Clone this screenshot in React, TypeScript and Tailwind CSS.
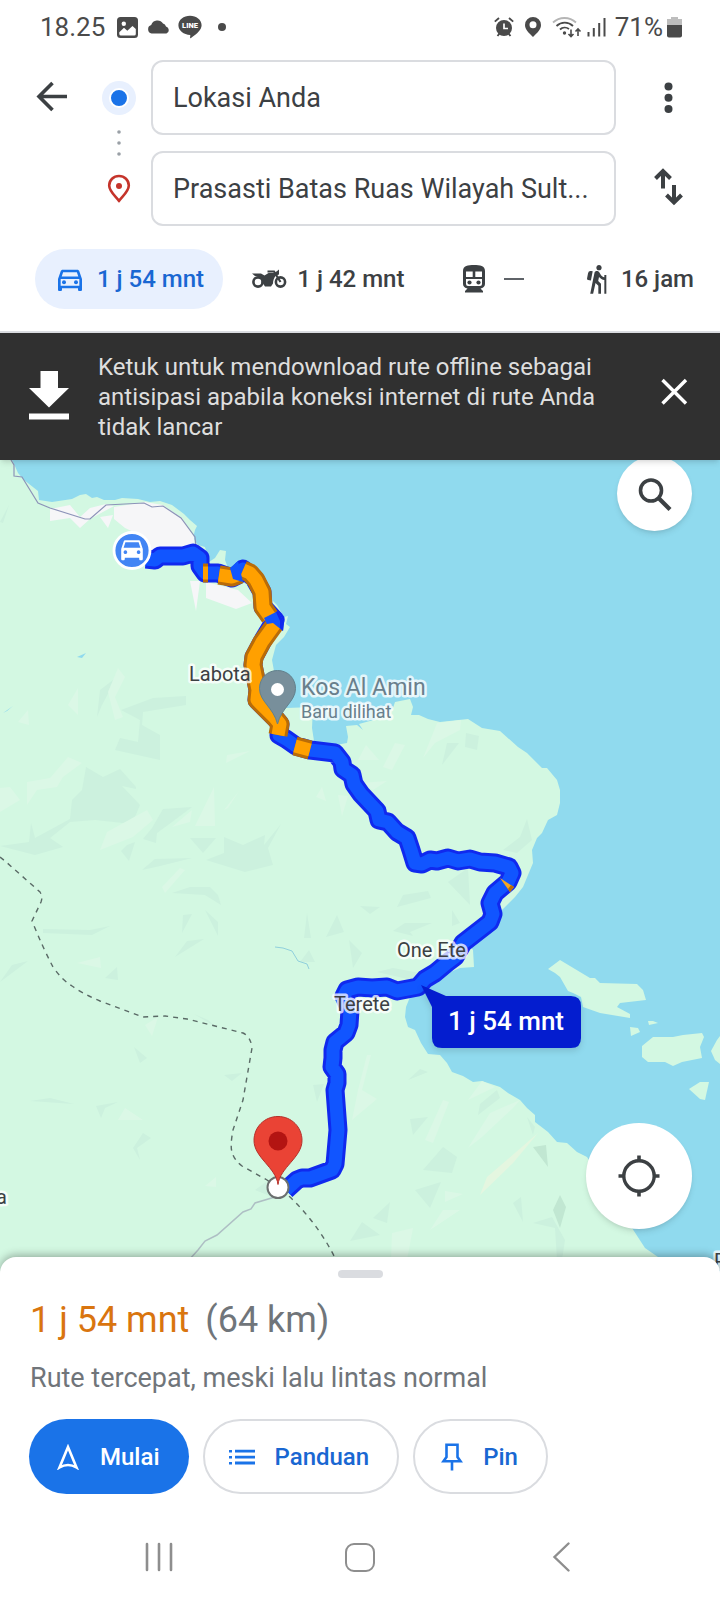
import * as React from "react"
import {
  MdClose,
  MdHiking,
  MdOutlineDirectionsCar,
} from "react-icons/md"

const ROUTE =
  "M146 559L155 560L160 556L183 556L193 553L200 558L200 566L205 573L218 573L232 578L238 575L243 569L254 578L262 592L263 607L275 620L262 642L254 657L253 665L258 690L257 700L275 718L280 724L279 735L286 739L296 746L310 750L335 753L342 762L343 769L352 775L354 784L361 794L377 811L379 820L388 822L397 832L407 838L411 850L415 863L422 864L430 860L437 861L448 858L458 861L470 859L480 862L495 863L509 867L512 873L508 882L495 893L490 903L493 914L490 922L463 943L455 957L447 963L435 973L425 979L418 987L397 991L387 987L372 988L358 987L347 990L344 996L350 1010L349 1025L346 1033L335 1042L333 1050L333 1058L332 1067L337 1074L337 1083L335 1090L338 1130L335 1164L332 1170L310 1178L302 1178L297 1180L286 1190"

// stretches with slow traffic, painted over the base route
const SLOW = [
  "M203 573L208 573",
  "M219 575L232 577L240 574",
  "M243 570L250 573L256 580L262 592L263 607L270 617",
  "M275 624L262 642L254 657L253 665L258 690L257 700L275 718L280 724L278 735",
  "M295 746L310 750",
]

const SHADE_DARK = [
  "86,767 103,777 120,769 136,787 136,789 122,786 140,805 132,824 95,820 70,822 50,838 63,847 35,855 0,846 29,842 31,823 35,838 70,819 72,800 82,790",
  "163,809 192,807 172,822 157,833 156,843 143,839 152,828",
  "127,845 135,842 129,861 121,851",
  "190,838 216,838 203,853",
  "224,837 243,845 265,835 264,845 281,824 268,848 273,865 245,872 206,860 224,853",
  "142,870 155,859 192,858 160,866",
  "172,893 190,887 210,887 218,895 221,905 205,895",
  "183,915 192,914 182,933",
  "205,910 218,922 218,936",
  "43,929 90,930 110,926 92,935 43,933",
  "175,957 187,941 204,939",
  "307,913 311,938 304,938",
  "337,915 344,932 326,937",
  "0,982 12,965 28,961",
  "117,967 118,980 105,978",
  "194,1014 208,1020 216,1027",
  "134,1047 147,1058 140,1063",
  "224,1075 242,1073 232,1081",
  "30,1101 50,1098 74,1104",
  "96,1106 118,1102 105,1108 101,1118",
  "143,1133 151,1138 137,1148 140,1160 133,1148",
  "313,1085 324,1084 317,1102",
  "300,962 309,950 315,962",
  "410,1119 428,1117 413,1135",
  "443,1147 457,1157 452,1173 423,1170",
  "415,1190 441,1182 430,1208",
  "527,1117 535,1127 533,1135",
  "513,1203 521,1197 523,1222",
  "533,1223 552,1217 565,1240 562,1260 557,1260 555,1228",
  "373,1218 390,1202 387,1223",
  "350,1241 362,1222 380,1235",
  "408,1080 420,1069 428,1072",
  "480,1104 497,1090 500,1098 478,1115",
  "377,972 393,968 420,973 412,980",
  "349,940 362,953 353,968",
  "393,931 405,923 432,923 410,932 413,936",
  "360,906 380,907 370,914",
  "452,910 460,923 452,926",
  "448,882 468,868 470,905",
  "397,907 403,895 428,891 431,898",
  "503,850 520,837 527,819 532,840 517,853",
  "447,743 459,743 442,765",
  "466,733 479,736 477,750 465,747",
  "97,717 100,690 117,677 102,705",
  "121,710 153,698 186,696 186,705 143,712 142,725 160,735 160,760 115,750 120,738 138,742 140,720",
  "0,522 9,505 3,523",
  "255,1190 266,1182 270,1196",
]

const SHADE_LIGHT = [
  "27,782 50,778 68,757 82,763 63,777 57,787 37,790 27,805",
  "0,788 10,787 20,800 0,812",
  "100,850 107,832 147,810 153,820 133,837",
  "195,826 214,787 215,826",
  "172,827 192,810 190,822",
  "162,887 180,868 185,870 165,893",
  "224,810 239,791 228,808",
  "227,755 250,751 226,763",
  "77,963 100,957 101,968",
  "145,1025 158,1017 152,1036",
  "118,1120 125,1108 143,1120",
  "205,1186 216,1177 216,1187",
  "367,1055 371,1055 362,1090 377,1099 352,1120 358,1090",
  "443,1100 449,1102 433,1143 425,1140",
  "468,1100 482,1081 495,1087",
  "468,1148 490,1113 520,1100 513,1108 482,1137",
  "430,1230 443,1210 460,1210",
  "392,1233 413,1228 407,1260 391,1260",
  "445,1191 463,1194 445,1202",
  "423,758 437,723 461,720 460,730 435,743",
  "383,767 395,743 405,745 392,770",
  "358,760 366,745 379,760",
  "360,783 387,781 373,790",
  "316,797 322,787 326,801",
  "338,795 348,796 342,816",
  "108,692 118,668 125,677 115,697 123,717 115,720",
  "68,705 78,688 78,715",
  "18,722 28,710 29,725",
]

const ISLANDS = [
  "548,969 560,960 590,978 595,978 600,983 637,984 643,990 646,1000 620,1003 617,1007 630,1014 630,1018 600,1013 583,1007 581,997 573,993 568,991 560,977 555,973",
  "648,1021 653,1021 658,1023 649,1025",
  "630,1027 638,1028 640,1032 631,1036",
  "642,1046 653,1037 673,1037 683,1035 702,1033 704,1037 700,1047 702,1058 682,1062 673,1066 665,1062 648,1062 642,1057",
  "711,1051 717,1040 720,1036 720,1064 715,1060",
  "689,1089 700,1082 709,1082 705,1100 700,1099",
]

const CAR =
  "M18.92 6.01C18.72 5.42 18.16 5 17.5 5h-11c-.66 0-1.21.42-1.42 1.01L3 12v8c0 .55.45 1 1 1h1c.55 0 1-.45 1-1v-1h12v1c0 .55.45 1 1 1h1c.55 0 1-.45 1-1v-8l-2.08-5.99zM6.5 16c-.83 0-1.5-.67-1.5-1.5S5.67 13 6.5 13s1.5.67 1.5 1.5S7.33 16 6.5 16zm11 0c-.83 0-1.5-.67-1.5-1.5s.67-1.5 1.5-1.5 1.5.67 1.5 1.5-.67 1.5-1.5 1.5zM5 11l1.5-4.5h11L19 11H5z"

function StatusBar() {
  return (
    <div className="flex h-[60px] items-center justify-between pb-1.5 pl-10 pr-[38px] text-[26px] leading-8 text-[#4a4a4a]">
      <div className="flex items-center">
        <span>18.25</span>
        <svg className="ml-3 h-[21px] w-[21px]" viewBox="0 0 21 21">
          <rect width="21" height="21" rx="3.5" fill="#4a4a4a" />
          <circle cx="6.8" cy="6.8" r="2.2" fill="#fff" />
          <path d="M2.3 15.2L7 10.8l3.3 3 5.2-4.9 3.3 3.2V17q0 1.6-1.6 1.6H4q-1.7 0-1.7-1.6z" fill="#fff" />
        </svg>
        <svg className="ml-[9px] h-[14px] w-[23px]" viewBox="0 0 23 14">
          <path d="M4.6 13.5A4.4 4.4 0 014.2 5 6.6 6.6 0 0116 3.6a4.6 4.6 0 013 3 3.6 3.6 0 01.4 6.9z" fill="#4a4a4a" />
        </svg>
        <svg className="ml-2 h-6 w-6" viewBox="0 0 24 24">
          <path d="M12 .8c6.3 0 11.6 4 11.6 9.4 0 4.400-4.200 8.200-10.600 12.800-.8.500-1 .3-.9-.5l.2-2.600C5.600 19.700.4 15.400.4 10.200.4 4.900 5.700.8 12 .8z" fill="#4a4a4a" />
          <text x="12" y="13" textAnchor="middle" fontSize="7.500" fontWeight="900" fill="#fff">
            LINE
          </text>
        </svg>
        <span className="ml-4 h-2 w-2 rounded-full bg-[#4a4a4a]" />
      </div>
      <div className="flex items-center">
        <svg className="h-5 w-5" viewBox="0 0 20 20" fill="none" stroke="#4a4a4a">
          <circle cx="10" cy="11" r="8" fill="#4a4a4a" stroke="none" />
          <path d="M.8 4.600L5 1M19.200 4.600L15 1M3.500 19l2-2.500M16.500 19l-2-2.500" strokeWidth="1.900" />
          <path d="M10 6.500V11.500h4" stroke="#fff" strokeWidth="1.700" />
        </svg>
        <svg className="ml-[11px] h-5 w-4" viewBox="0 0 16 20">
          <path fillRule="evenodd" d="M8 0a8 8 0 018 8c0 4.500-4 8-8 12C4 16 0 12.500 0 8a8 8 0 018-8zm0 4.200a3.500 3.500 0 100 7 3.500 3.500 0 000-7z" fill="#4a4a4a" />
        </svg>
        <svg className="ml-[11px] h-[22px] w-[30px]" viewBox="0 0 30 22" fill="none" stroke="#4a4a4a" strokeWidth="1.800">
          <path d="M1 6.500a17 17 0 0123 0" stroke="#b5b5b5" />
          <path d="M4.500 10a12 12 0 0116.500 0M8 13.500a7 7 0 019-.5" />
          <circle cx="12.500" cy="17" r="1.700" fill="#4a4a4a" stroke="none" />
          <path d="M19 13.500v7M16.500 18l2.500 2.500 2.500-2.500M26 20v-7M23.500 15.500L26 13l2.500 2.500" strokeWidth="1.600" />
        </svg>
        <svg className="ml-[5px] h-5 w-[19px]" viewBox="0 0 19 20" fill="none" stroke="#4a4a4a" strokeWidth="2">
          <path d="M1.500 15v4.500M6.800 11v8.500M12.200 6v13.500M17.500 1v18.500" />
        </svg>
        <span className="ml-[9px]">71%</span>
        <svg className="ml-1 h-[21px] w-[15px]" viewBox="0 0 15 21">
          <path d="M4 0h7v2h4v7H0V2h4z" fill="#bdbdbd" />
          <path d="M0 8h15v10.500q0 2-2 2H2q-2 0-2-2z" fill="#4a4a4a" />
        </svg>
      </div>
    </div>
  )
}

function RouteFields() {
  return (
    <div className="flex pl-[31px] pr-8">
      <button type="button" aria-label="Kembali" className="mt-4 h-10 w-10 text-[#3c4043]">
        <svg className="h-10 w-10" viewBox="0 0 40 40" fill="none" stroke="currentColor" strokeWidth="3.600">
          <path d="M36 20.500H8M21.500 7L8 20.500L21.500 34" />
        </svg>
      </button>
      <div className="ml-[31px] flex w-[34px] flex-col items-center pt-[21px]">
        <span className="flex h-[34px] w-[34px] items-center justify-center rounded-full bg-[#e8f0fe]">
          <span className="h-5 w-5 rounded-full border-2 border-white bg-[#1a73e8]" />
        </span>
        <svg className="mt-[14px] h-7 w-1" viewBox="0 0 4 28" fill="#9aa0a6">
          <circle cx="2" cy="3" r="1.800" />
          <circle cx="2" cy="14" r="1.800" />
          <circle cx="2" cy="25" r="1.800" />
        </svg>
        <svg className="mt-4 h-[30px] w-6" viewBox="0 0 24 30">
          <path d="M12 3c5.500 0 9.800 4.200 9.800 9.500 0 5.500-5 9.500-9.800 15.300C7.200 22 2.200 18 2.200 12.500 2.200 7.200 6.500 3 12 3z" fill="none" stroke="#c5342b" strokeWidth="2.600" />
          <circle cx="12" cy="13" r="3" fill="#c5342b" />
        </svg>
      </div>
      <div className="ml-[15px] flex min-w-0 flex-1 flex-col gap-4">
        <input
          type="text"
          aria-label="Titik awal"
          defaultValue="Lokasi Anda"
          className="h-[75px] w-full rounded-xl border-2 border-[#dadce0] bg-white px-5 text-[27px] text-[#3c4043]"
        />
        <input
          type="text"
          aria-label="Tujuan"
          defaultValue="Prasasti Batas Ruas Wilayah Sult..."
          className="h-[75px] w-full rounded-xl border-2 border-[#dadce0] bg-white px-5 text-[27px] text-[#3c4043]"
        />
      </div>
      <div className="ml-8 flex w-10 flex-col items-center pt-[18px]">
        <button type="button" aria-label="Opsi lainnya" className="h-10 w-10">
          <svg className="h-10 w-10" viewBox="0 0 40 40" fill="#3c4043">
            <circle cx="20.500" cy="8.500" r="4" />
            <circle cx="20.500" cy="19.700" r="4" />
            <circle cx="20.500" cy="31" r="4" />
          </svg>
        </button>
        <button type="button" aria-label="Tukar titik awal dan tujuan" className="mt-12 h-10 w-10">
          <svg className="h-10 w-10" viewBox="0 0 40 40" fill="none" stroke="#3c4043" strokeWidth="4">
            <path d="M15 22.500V5M7.500 12.500l7.500-7.500 7.500 7.500M26 19v17.500M18.500 29l7.500 7.500 7.500-7.500" />
          </svg>
        </button>
      </div>
    </div>
  )
}

function MotorcycleIcon() {
  return (
    <svg className="h-[22px] w-[35px]" viewBox="0 0 35 22">
      <g fill="none" stroke="#3c4043">
        <circle cx="6" cy="14" r="4.600" strokeWidth="2.600" />
        <circle cx="28.500" cy="14" r="4.600" strokeWidth="2.600" />
        <path d="M28.500 14L22 3.500h-6.500" strokeWidth="2.200" />
      </g>
      <path d="M0 5.500h9l3.500 2 4-2.500h6l4.500-3.500v5l-3 1c-2 2-3 5-3 8l-2 3h-6l-2-3h-2C11 11 8 8.500 3 8z" fill="#3c4043" />
    </svg>
  )
}

function TrainIcon() {
  return (
    <svg className="h-7 w-6" viewBox="0 0 24 28">
      <path fillRule="evenodd" d="M12 0c6 0 11 .8 11 6v13c0 2.500-2 4.300-4.500 4.500L21 26v1.500H3V26l2.500-2.500C3 23.300 1 21.500 1 19V6C1 .8 6 0 12 0zM4 6.500v5.500h6.700V6.500zm9.300 0v5.500H20V6.500zM4 14v5q0 2 2 2h12q2 0 2-2v-5z" fill="#3c4043" />
      <circle cx="7.500" cy="17.500" r="2.100" fill="#3c4043" />
      <circle cx="16.500" cy="17.500" r="2.100" fill="#3c4043" />
    </svg>
  )
}

function TravelModes() {
  return (
    <div className="mt-[23px] flex items-center justify-between border-b-2 border-[#dadce0] pb-[22px] pl-[35px] pr-[26px] text-[24px] font-medium leading-8 text-[#3c4043]">
      <button type="button" className="flex h-[60px] items-center gap-[11px] rounded-full bg-[#e8f0fe] pl-[19px] pr-[19px] text-[#1967d2]">
        <MdOutlineDirectionsCar className="h-8 w-8 text-[#1a73e8]" />
        1 j 54 mnt
      </button>
      <button type="button" className="flex items-center gap-[10px]">
        <MotorcycleIcon />1 j 42 mnt
      </button>
      <button type="button" aria-label="Transportasi umum" className="ml-7 flex items-center gap-[18px]">
        <TrainIcon />
        <span className="h-[2px] w-5 bg-[#5f6368]" />
      </button>
      <button type="button" className="ml-7 flex items-center gap-2">
        <MdHiking className="h-8 w-8" />
        16 jam
      </button>
    </div>
  )
}

function OfflineBanner() {
  return (
    <div className="relative z-10 flex items-start bg-[#303030] pb-[18px] pl-[29px] pr-[26px] pt-[19px] shadow-md">
      <svg className="mt-[18px] h-[50px] w-10 shrink-0" viewBox="0 0 40 50" fill="#fff">
        <path d="M11.500 1h17.500v17H40L20 37.500 0 18h11.500z" />
        <path d="M0 43.500h40v6H0z" />
      </svg>
      <p className="ml-[29px] max-w-[520px] flex-1 text-[24px] leading-[30px] text-[#dedede]">
        Ketuk untuk mendownload rute offline sebagai antisipasi apabila koneksi internet di rute Anda tidak lancar
      </p>
      <button type="button" aria-label="Tutup" className="ml-auto mt-5 text-white">
        <svg className="h-10 w-10" viewBox="0 0 40 40" fill="none" stroke="currentColor" strokeWidth="3.400">
          <path d="M8.500 8L32 31.500M32 8L8.500 31.500" />
        </svg>
      </button>
    </div>
  )
}

function Label({ x, y, size = 20, color = "#3c4043", children }: any) {
  return (
    <text
      x={x}
      y={y}
      fontSize={size}
      fill={color}
      stroke="#fff"
      strokeOpacity="0.75"
      strokeWidth="5"
      strokeLinejoin="round"
      paintOrder="stroke"
    >
      {children}
    </text>
  )
}

function RouteMap() {
  return (
    <svg className="block w-full" viewBox="0 460 720 813" role="img" aria-label="Peta rute">
      <rect y="460" width="720" height="813" fill="#90daee" />
      <path
        fill="#d3f8e2"
        d="M0 460H12L14 464L18 473L24 480L38 491L39 500L52 502L72 499L80 495L86 494L92 498L97 497L104 500L115 500L122 498L138 499L150 502L160 501L172 505L184 514L190 520L197 526L195 530L193 538L198 545L205 547L209 562L215 558L220 550L226 551L225 560L228 568L240 566L262 590L277 605L284 617L288 616L286 624L290 627L284 637L276 645L272 660L280 704L287 708L313 707L312 728L314 741L330 746L347 743L348 737L346 726L357 725L363 730L359 724L377 719L393 708L395 702L410 699L413 707L411 715L419 715L428 719L440 722L468 719L482 728L500 731L518 747L527 753L542 768L547 768L557 780L560 790L560 803L557 815L548 820L542 833L537 838L532 850L533 863L528 875L523 887L515 897L503 909L467 943L473 950L474 967L460 968L443 975L410 997L406 1007L405 1017L408 1027L415 1030L421 1043L428 1054L440 1055L447 1063L452 1072L463 1076L473 1082L482 1081L500 1087L508 1093L520 1100L527 1108L535 1115L535 1122L548 1132L557 1142L567 1143L577 1152L587 1157L632 1228L645 1248L658 1257L680 1273H0Z"
      />
      {ISLANDS.map((p) => (
        <polygon key={p} points={p} fill="#d3f8e2" />
      ))}
      {SHADE_DARK.map((p) => (
        <polygon key={p} points={p} fill="#ccf1de" />
      ))}
      {SHADE_LIGHT.map((p) => (
        <polygon key={p} points={p} fill="#dbf8e6" />
      ))}
      <path d="M480 1195L487 1177L538 1133L513 1163Z" fill="#e4f6e0" />
      <path d="M533 1147L546 1145L548 1167ZM560 1195L566 1207L560 1228L553 1210Z" fill="#c1e7d2" />

      {/* built-up areas */}
      <g fill="#f6f6f8">
        <path d="M50 509L70 505L80 517L90 508L106 504L114 506L90 519L80 528L70 518L50 521Z" />
        <path d="M100 517L113 515L108 528Z" />
        <path d="M114 507L145 502L163 505L182 518L194 537L195 552L150 552L140 535L125 528L114 519Z" />
        <path d="M190 581H200L196 611Z" />
        <path d="M206 582L238 590L252 603L236 609L206 598Z" />
      </g>

      <g fill="none">
        <path d="M11 460L14 465V476L22 477L38 503L50 508L85 519L90 519L106 505L144 503L152 507L163 506L181 518L195 537L196 547" stroke="#8c93b8" strokeWidth="1.200" />
        <path d="M275 1197L255 1203L251 1209L243 1212L217 1235L205 1241L198 1250L188 1261" stroke="#aebfc4" strokeWidth="1.500" />
        <path d="M275 947L283 948L292 951L298 961L307 964L309 969" stroke="#90d0dc" />
        <path
          d="M0 857L5 861L40 892Q43 897 41 902L32 921Q43 948 53 967Q62 980 72 986Q85 995 100 1001L143 1017L165 1016L187 1019L243 1033Q251 1037 252 1048L243 1100L233 1130Q230 1146 232 1152Q234 1160 242 1166L267 1180L290 1197Q320 1226 337 1262"
          stroke="#5a6a66"
          strokeWidth="1.400"
          strokeDasharray="5 5"
        />
      </g>
      <path d="M77 657L86 653L82 658ZM3 713L13 706L7 711Z" fill="#90daee" />

      <g fill="none" strokeLinejoin="round">
        <path d={ROUTE} stroke="#1029ee" strokeWidth="19" />
        <path d={ROUTE} stroke="#1155ff" strokeWidth="13" />
        {SLOW.map((d) => (
          <React.Fragment key={d}>
            <path d={d} stroke="#b96c08" strokeWidth="19" />
            <path d={d} stroke="#ffa000" strokeWidth="13" />
          </React.Fragment>
        ))}
      </g>
      <path d="M500 878L514 887L510 892Z" fill="#f5a623" />
      <path d="M511 885L514 887L510 892L508 889Z" fill="#b96c08" />
      {/* short free-flowing bits between the slow ones */}
      <path d="M230 568L238 561L243 582L233 579Z" fill="#1155ff" />
      <path d="M264 618L278 611L284 622L283 631L273 623L267 624Z" fill="#1155ff" />
      <path d="M278 611L284 622L283 631L280 628V621L276 612Z" fill="#1029ee" />

      <Label x="189" y="681">Labota</Label>
      <Label x="397" y="957">One Ete</Label>
      <Label x="334" y="1011">Terete</Label>
      <Label x="-4" y="1204">a</Label>
      <Label x="714" y="1268">P</Label>
      <Label x="301" y="695" size={23} color="#697f8c">Kos Al Amin</Label>
      <Label x="301" y="718" size={18} color="#697f8c">Baru dilihat</Label>

      <path d="M277.500 670.500c10.500 0 18 8 18 18 0 13-14 19-18 35.500-4-16.500-18-22.500-18-35.500 0-10 7.500-18 18-18z" fill="#788f9b" stroke="#62808c" />
      <circle cx="277.500" cy="689.500" r="6.500" fill="#fff" />

      <circle cx="132" cy="550.500" r="18" fill="#4285f4" stroke="#fff" strokeWidth="2.800" />
      <path d={CAR} fill="#fff" transform="translate(117.600 534) scale(1.200 1.250)" />

      <circle cx="278" cy="1187.500" r="10.500" fill="#fff" stroke="#6b706f" strokeWidth="2" />
      <path d="M278 1116.500c13.500 0 24 10.500 24 24 0 17-22 27-24 44-2-17-24-27-24-44 0-13.500 10.500-24 24-24z" fill="#ea4335" stroke="#b5302a" />
      <circle cx="278" cy="1141" r="9.500" fill="#b31412" />

      <g className="drop-shadow-md">
        <path d="M421 985L446 996H571Q581 996 581 1006V1038Q581 1048 571 1048H442Q432 1048 432 1038V1007Z" fill="#041dcf" />
      </g>
      <text x="506" y="1030" fontSize="26" fontWeight="500" fill="#fff" textAnchor="middle">
        1 j 54 mnt
      </text>
    </svg>
  )
}

function MapArea() {
  return (
    <div className="relative">
      <RouteMap />
      <button
        type="button"
        aria-label="Telusuri di sepanjang rute"
        className="absolute -top-1 right-7 flex h-[75px] w-[75px] items-center justify-center rounded-full bg-white shadow-md"
      >
        <svg className="h-9 w-9" viewBox="0 0 36 36" fill="none" stroke="#3c4043">
          <circle cx="14" cy="14.500" r="10.500" strokeWidth="3.600" />
          <path d="M21.500 22L33 33.500" strokeWidth="4.200" />
        </svg>
      </button>
      <button
        type="button"
        aria-label="Lokasi saya"
        className="absolute bottom-11 right-7 flex h-[106px] w-[106px] items-center justify-center rounded-full bg-white shadow-md"
      >
        <svg className="h-[42px] w-[42px]" viewBox="0 0 42 42" fill="none" stroke="#3c4043">
          <circle cx="21" cy="21" r="15.200" strokeWidth="3.400" />
          <path d="M21 .5v6M21 35.500v6M.5 21h6M35.500 21h6" strokeWidth="3.600" />
        </svg>
      </button>
    </div>
  )
}

function RouteSheet() {
  return (
    <div className="relative -mt-4 rounded-t-2xl bg-white px-[29px] pt-[13px] shadow-[0_-2px_8px_rgba(0,0,0,0.3)]">
      <div className="mx-auto h-2 w-[45px] rounded-full bg-[#dadce0]" />
      <h1 className="mt-5 flex gap-4 px-px text-[36px] leading-[44px]">
        <span className="text-[#d9750f]">1 j 54 mnt</span>
        <span className="text-[#70757a]">(64 km)</span>
      </h1>
      <p className="mt-[18px] px-px text-[27px] leading-9 text-[#70757a]">Rute tercepat, meski lalu lintas normal</p>
      <div className="mt-[23px] flex gap-[14px] text-[24px] font-medium">
        <button type="button" className="flex h-[75px] items-center gap-[21px] rounded-full bg-[#1a73e8] pl-7 pr-[29px] text-white">
          <svg className="h-[26px] w-[22px]" viewBox="0 0 22 26" fill="none" stroke="#fff" strokeWidth="2.600">
            <path d="M11 3L19.500 23.500Q11 18.500 2.500 23.500Z" />
          </svg>
          Mulai
        </button>
        <button type="button" className="flex h-[75px] items-center gap-5 rounded-full border-2 border-[#dadce0] pl-6 pr-7 text-[#1967d2]">
          <svg className="h-4 w-[26px]" viewBox="0 0 26 16" fill="#1a73e8">
            <path d="M0 1h3v2.400H0zM6 .8h20v2.800H6zM0 7h3v2.400H0zM6 6.800h20v2.800H6zM0 13h3v2.400H0zM6 12.600h20v2.800H6z" />
          </svg>
          Panduan
        </button>
        <button type="button" className="flex h-[75px] items-center gap-5 rounded-full border-2 border-[#dadce0] pl-[26px] pr-7 text-[#1967d2]">
          <svg className="h-7 w-[22px]" viewBox="0 0 22 28" fill="none" stroke="#1a73e8" strokeWidth="2.600">
            <path d="M5.500 1.800h11V14l3 4.200h-17l3-4.200zM11 18v9.500" />
          </svg>
          Pin
        </button>
      </div>
    </div>
  )
}

function NavBar() {
  return (
    <nav className="relative flex items-center justify-between bg-white px-[129px] pb-[13px] pt-[33px]">
      <button type="button" aria-label="Aplikasi terbaru" className="flex h-[60px] w-[60px] items-center justify-center">
        <svg className="h-[30px] w-[30px]" viewBox="0 0 30 30" stroke="#8e8e8e" strokeWidth="2.600" strokeLinecap="round">
          <path d="M3 2v26M15 2v26M27 2v26" />
        </svg>
      </button>
      <button type="button" aria-label="Beranda" className="flex h-[60px] w-[60px] items-center justify-center">
        <span className="h-[29px] w-[30px] rounded-[9px] border-2 border-[#8e8e8e]" />
      </button>
      <button type="button" aria-label="Kembali ke layar sebelumnya" className="flex h-[60px] w-[60px] items-center justify-center">
        <svg className="h-[30px] w-[18px]" viewBox="0 0 18 30" fill="none" stroke="#8e8e8e" strokeWidth="2.400" strokeLinecap="round">
          <path d="M16.500 1.500L2.500 15L16.500 28.500" />
        </svg>
      </button>
    </nav>
  )
}

export default function App() {
  return (
    <div className="min-h-screen overflow-hidden bg-white font-['Roboto',sans-serif]">
      <StatusBar />
      <RouteFields />
      <TravelModes />
      <OfflineBanner />
      <MapArea />
      <RouteSheet />
      <NavBar />
    </div>
  )
}
